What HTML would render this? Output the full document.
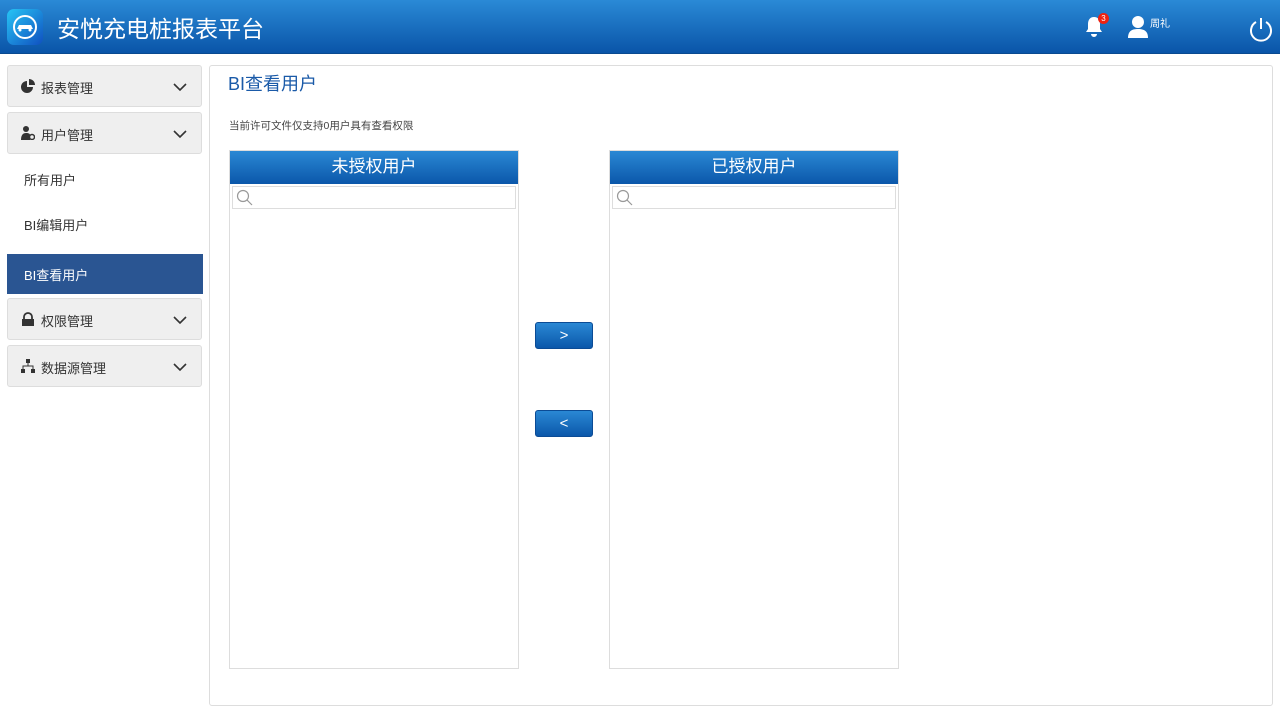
<!DOCTYPE html>
<html><head><meta charset="utf-8"><style>
*{box-sizing:border-box;margin:0;padding:0}
body{width:1280px;height:720px;background:#fff;font-family:"Liberation Sans","Noto Sans CJK SC",sans-serif;position:relative;overflow:hidden}
.hdr{position:absolute;left:0;top:0;width:1280px;height:54px;background:linear-gradient(#2a8ad6,#0a55a8);border-bottom:1px solid #0a4a90}
.logo{position:absolute;left:7px;top:9px;width:36px;height:36px;border-radius:7px;background:linear-gradient(135deg,#27c5f5,#1050c0)}
.title{position:absolute;left:57px;top:10px;color:#fff;font-size:23px}
.grp{position:absolute;left:7px;width:195px;height:42px;background:#efefef;border:1px solid #ddd;border-radius:3px;font-size:13px;color:#333;padding:12px 0 0 33px}
.grp .ic{position:absolute;left:13px;top:13px}
.grp .ch{position:absolute;right:14px;top:16px}
.item{position:absolute;left:24px;font-size:13px;color:#333}
.act{position:absolute;left:7px;top:254px;width:196px;height:40px;background:#2a5592;color:#fff;font-size:13px;padding:11px 0 0 17px}
.main{position:absolute;left:209px;top:65px;width:1064px;height:641px;border:1px solid #ddd;border-radius:3px}
.box{position:absolute;top:150px;width:290px;height:519px;border:1px solid #ddd}
.bh{height:33px;background:linear-gradient(#2a88d4,#0b57aa);color:#fff;font-size:17px;text-align:center;line-height:32px}
.srch{position:absolute;left:2px;top:35px;width:284px;height:23px;border:1px solid #ddd}
.btn{position:absolute;left:535px;width:58px;height:27px;border-radius:3px;background:linear-gradient(#2a88d4,#0b57aa);color:#fff;text-align:center;line-height:26px;font-size:15px;border:1px solid #0b4b95}
</style></head><body>
<div class="hdr">
<div class="logo"><svg width="36" height="36"><circle cx="18" cy="18" r="11" fill="none" stroke="#fff" stroke-width="2"/><path d="M10 20l2-4h12l2 4z" fill="#fff"/><circle cx="13" cy="21" r="1.5" fill="#fff"/><circle cx="23" cy="21" r="1.5" fill="#fff"/></svg></div>
<div class="title">安悦充电桩报表平台</div>
<svg style="position:absolute;left:1083px;top:15px" width="22" height="24"><path d="M11 2c-4 0-6 3-6 7v5l-2 3h16l-2-3V9c0-4-2-7-6-7zM8 19a3 3 0 0 0 6 0z" fill="#fff"/></svg>
<div style="position:absolute;left:1098px;top:13px;width:11px;height:11px;border-radius:50%;background:#e21;color:#fff;font-size:8px;text-align:center;line-height:11px">3</div>
<svg style="position:absolute;left:1127px;top:15px" width="22" height="24"><circle cx="11" cy="7" r="6" fill="#fff"/><path d="M1 23c0-7 4-9 10-9s10 2 10 9z" fill="#fff"/></svg>
<div style="position:absolute;left:1150px;top:15px;color:#fff;font-size:10px">周礼</div>
<svg style="position:absolute;left:1248px;top:16px" width="26" height="26"><path d="M8 6a10 10 0 1 0 10 0" fill="none" stroke="#fff" stroke-width="2"/><path d="M13 2v11" stroke="#fff" stroke-width="2"/></svg>
</div>
<div class="grp" style="top:65px"><svg class="ic" width="14" height="14"><path d="M6 2a6 6 0 1 0 6 6H6z" fill="#333"/><path d="M8 0v6h6a6 6 0 0 0-6-6z" fill="#333"/></svg>报表管理<svg class="ch" width="14" height="10"><path d="M1 2l6 6 6-6" fill="none" stroke="#333" stroke-width="1.6"/></svg></div>
<div class="grp" style="top:112px"><svg class="ic" width="14" height="14"><circle cx="5" cy="3" r="3" fill="#333"/><path d="M0 14c0-5 2-7 5-7s4 1 4 2v5z" fill="#333"/><circle cx="11" cy="11" r="2.5" fill="none" stroke="#333" stroke-width="1.5"/></svg>用户管理<svg class="ch" width="14" height="10"><path d="M1 2l6 6 6-6" fill="none" stroke="#333" stroke-width="1.6"/></svg></div>
<div class="item" style="top:170px">所有用户</div>
<div class="item" style="top:215px">BI编辑用户</div>
<div class="act">BI查看用户</div>
<div class="grp" style="top:298px"><svg class="ic" width="14" height="14"><path d="M3 7V5a4 4 0 0 1 8 0v2" fill="none" stroke="#333" stroke-width="1.8"/><rect x="1" y="7" width="12" height="7" fill="#333"/></svg>权限管理<svg class="ch" width="14" height="10"><path d="M1 2l6 6 6-6" fill="none" stroke="#333" stroke-width="1.6"/></svg></div>
<div class="grp" style="top:345px"><svg class="ic" width="14" height="14"><rect x="5" y="0" width="4" height="4" fill="#333"/><path d="M7 4v3M2 10V7h10v3" fill="none" stroke="#333"/><rect x="0" y="10" width="4" height="4" fill="#333"/><rect x="10" y="10" width="4" height="4" fill="#333"/></svg>数据源管理<svg class="ch" width="14" height="10"><path d="M1 2l6 6 6-6" fill="none" stroke="#333" stroke-width="1.6"/></svg></div>
<div class="main"></div>
<div style="position:absolute;left:228px;top:70px;font-size:18px;color:#1a5aa8">BI查看用户</div>
<div style="position:absolute;left:229px;top:118px;font-size:10.5px;color:#444">当前许可文件仅支持0用户具有查看权限</div>
<div class="box" style="left:229px"><div class="bh">未授权用户</div><div class="srch"><svg style="position:absolute;left:3px;top:2px" width="18" height="18"><circle cx="7" cy="7" r="5.5" fill="none" stroke="#999" stroke-width="1.2"/><path d="M11 11l5 5" stroke="#999" stroke-width="1.2"/></svg></div></div>
<div class="box" style="left:609px"><div class="bh">已授权用户</div><div class="srch"><svg style="position:absolute;left:3px;top:2px" width="18" height="18"><circle cx="7" cy="7" r="5.5" fill="none" stroke="#999" stroke-width="1.2"/><path d="M11 11l5 5" stroke="#999" stroke-width="1.2"/></svg></div></div>
<div class="btn" style="top:322px">&gt;</div>
<div class="btn" style="top:410px">&lt;</div>
</body></html>
